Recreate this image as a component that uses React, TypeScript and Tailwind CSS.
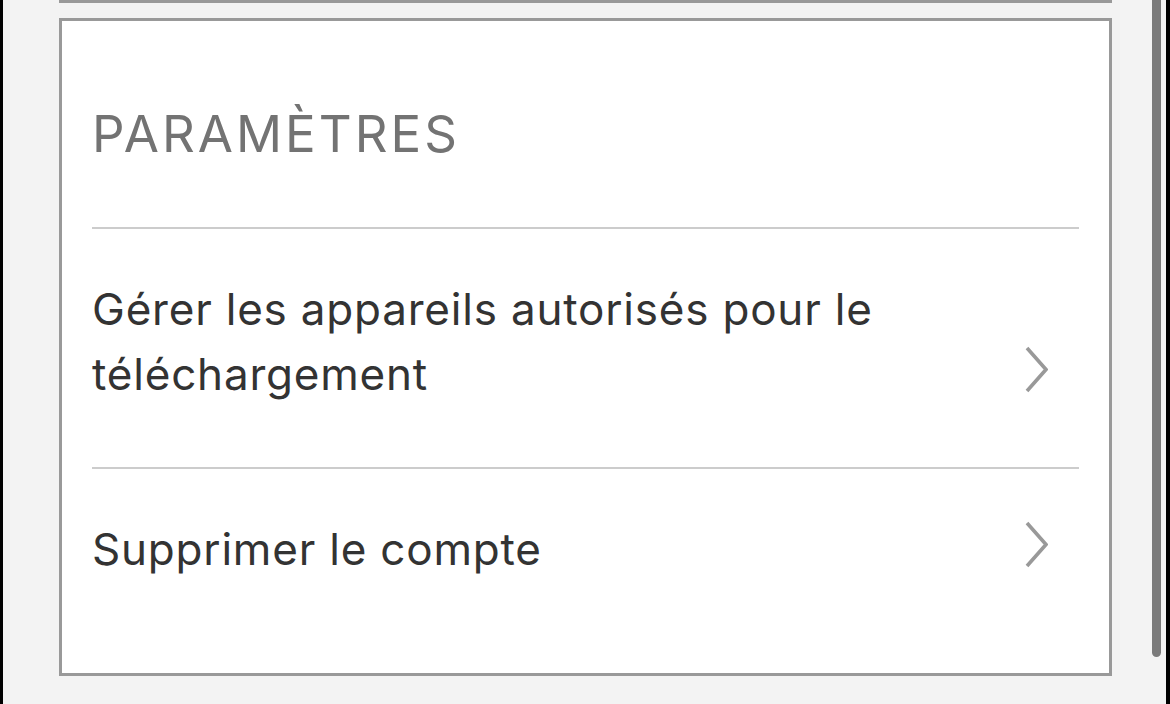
import { ReactNode } from "react";

function Chevron() {
  return (
    <svg width="24" height="48" viewBox="0 0 24 48" className="shrink-0">
      <polyline points="3,3 22,24.5 3,46" fill="none" stroke="#999999" strokeWidth="3.6" />
    </svg>
  );
}

function SettingRow({ children, last }: { children: ReactNode; last?: boolean }) {
  return (
    <a
      href="#"
      className={`flex items-end justify-between pt-[48px] ${last ? "pb-[59px]" : "pb-[60px] border-b-2 border-[#cccccc]"}`}
    >
      <span className="text-[44px] leading-[65px] tracking-[0.8px] text-[#333333] max-w-[900px]">{children}</span>
      <span className="mr-[31px] mb-[14px]">
        <Chevron />
      </span>
    </a>
  );
}

export default function App() {
  return (
    <div
      className="w-[1170px] h-[704px] bg-[#f3f3f3] flex overflow-hidden border-l-[3px] border-r-[4px] border-black"
      style={{ fontFamily: "Inter, 'Noto Sans', sans-serif" }}
    >
      <div className="pl-[56px] w-[1109px] shrink-0">
        <div className="h-[3px] bg-[#999999]" />
        <section className="mt-[15px] bg-white border-[3px] border-[#999999] px-[30px] pb-[32px]">
          <h2 className="pt-[87px] pb-[68px] border-b-2 border-[#cccccc] text-[51px] leading-none tracking-[3px] text-[#737373]">
            PARAMÈTRES
          </h2>
          <SettingRow>Gérer les appareils autorisés pour le téléchargement</SettingRow>
          <SettingRow last>Supprimer le compte</SettingRow>
        </section>
      </div>
      <div className="ml-[40px] w-[9px] h-[657px] bg-[#7b7b7b] rounded-b-full shrink-0" />
    </div>
  );
}
